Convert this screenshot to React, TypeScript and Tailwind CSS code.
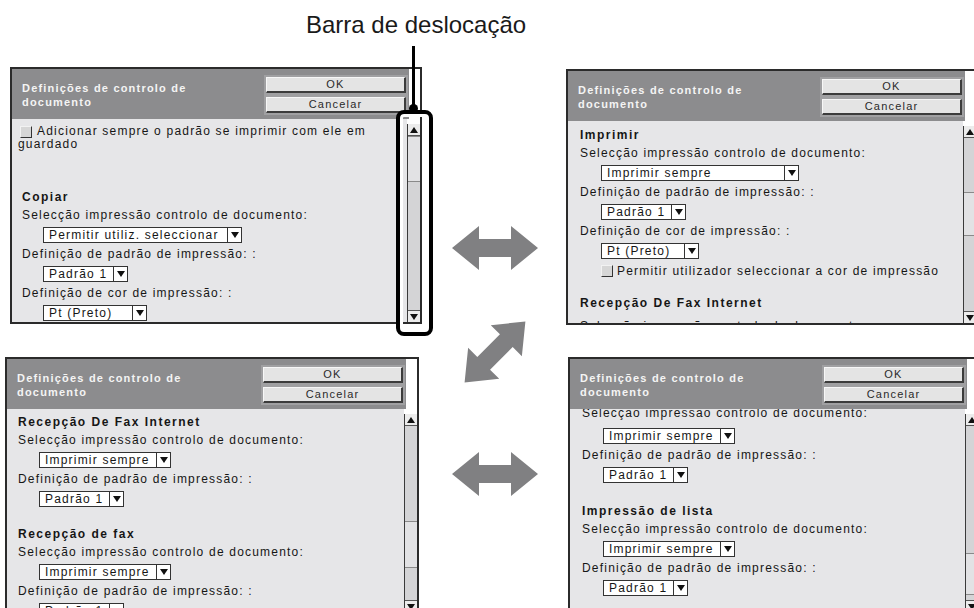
import React from "react";

const body = "text-[12px] tracking-[1.2px] text-[#161616] whitespace-nowrap";

function Caret({up}: {up?: boolean}) {
    return (
        <svg width="8" height="6" viewBox="0 0 8 6">
            <polygon points={up ? "0,6 8,6 4,0" : "0,0 8,0 4,6"} fill="#111"/>
        </svg>
    );
}

function Btn({children}: {children: React.ReactNode}) {
    return (
        <div className="h-[16px] w-[140px] bg-[#e4e4e4] border-t border-l border-r-2 border-b-2 border-t-[#f7f7f7] border-l-[#f7f7f7] border-r-[#3c3c3c] border-b-[#3c3c3c] text-center text-[11px] leading-[13px] tracking-[1.2px] text-[#2a2a2a]">
            {children}
        </div>
    );
}

function Box() {
    return <span className="inline-block w-[12px] h-[12px] shrink-0 bg-[#d6d6d6] border border-t-[#f2f2f2] border-l-[#f2f2f2] border-r-[#333] border-b-[#333]"/>;
}

function Heading({children, className = ""}: {children: React.ReactNode, className?: string}) {
    return <div className={`h-[18px] leading-[18px] font-bold tracking-[1.5px] ${body} ${className}`}>{children}</div>;
}

function Label({children, className = ""}: {children: React.ReactNode, className?: string}) {
    return <div className={`h-[19px] leading-[19px] ${body} ${className}`}>{children}</div>;
}

function Select({children, w}: {children: React.ReactNode, w: string}) {
    return (
        <div className={`flex h-[16px] mt-[2px] mb-[2px] ml-[21px] border border-[#333] bg-white ${w}`}>
            <div className={`flex-1 pl-[5px] leading-[14px] ${body}`}>{children}</div>
            <div className="w-[14px] flex items-center justify-center border-l border-[#333]">
                <Caret/>
            </div>
        </div>
    );
}

function Scrollbar({thumb}: {thumb: string}) {
    return (
        <div className="flex flex-col w-[13px] shrink-0 bg-white pt-[5px]">
            <div className="flex flex-col flex-1 border-l border-[#3a3a3a] bg-[#d4d4d6]">
                <div className="h-[12px] shrink-0 flex items-center justify-center bg-[#ececec] border-b border-[#555]">
                    <Caret up/>
                </div>
                <div className={`shrink-0 bg-[#e2e2e4] border-y border-[#8a8a8a] ${thumb}`}/>
                <div className="mt-auto h-[12px] shrink-0 flex items-center justify-center bg-[#ececec] border-t border-[#555]">
                    <Caret/>
                </div>
            </div>
        </div>
    );
}

interface PanelProps {
    className: string,
    thumb: string,
    content: string,
    children: React.ReactNode
}

function Panel(props: PanelProps) {
    const {className, thumb, content, children} = props;

    return (
        <div className={`flex flex-col shrink-0 border-2 border-[#2b2b2b] bg-white overflow-hidden ${className}`}>
            <div className="flex h-[50px] shrink-0 pr-[11px]">
                <div className="flex flex-1 bg-[#8c8c8e]">
                    <div className="flex-1 pl-[10px] pt-[12px] text-[11px] font-bold leading-[14px] tracking-[1.2px] text-[#f4f4f4] whitespace-nowrap">
                        Definições de controlo de<br/>documento
                    </div>
                    <div className="flex flex-col self-start gap-[4px] mt-[6px] mr-[1px] p-[2px] bg-[#a0a0a2]">
                        <Btn>OK</Btn>
                        <Btn>Cancelar</Btn>
                    </div>
                </div>
            </div>
            <div className="flex flex-1 min-h-0">
                <div className={`flex-1 min-w-0 overflow-hidden bg-[#e6e6e8] ${content}`}>
                    {children}
                </div>
                <Scrollbar thumb={thumb}/>
            </div>
        </div>
    );
}

function HArrow() {
    return (
        <svg width="86" height="44" viewBox="0 0 86 44">
            <polygon points="0,22 27,0 27,13 59,13 59,0 86,22 59,44 59,31 27,31 27,44" fill="#808082"/>
        </svg>
    );
}

function DArrow() {
    return (
        <svg width="62" height="62" viewBox="0 0 62 62">
            <g transform="translate(31 31) rotate(-45) translate(-43 -22)">
                <polygon points="0,22 27,0 27,13 59,13 59,0 86,22 59,44 59,31 27,31 27,44" fill="#808082"/>
            </g>
        </svg>
    );
}

export default function App() {
    return (
        <div className="relative w-[974px] h-[608px] overflow-hidden bg-white font-['Liberation_Sans',Arial,sans-serif]">
            <div className="h-[67px] pl-[306px] pt-[11px] text-[24px] leading-[28px] text-[#1a1a1a]">
                Barra de deslocação
            </div>

            <div className="flex">
                <div className="flex flex-col w-[422px] shrink-0">
                    <Panel className="ml-[10px] w-[412px] h-[257px]" thumb="h-[46px]" content="pl-[10px]">
                        <div className={`pt-[6px] -ml-[4px] leading-[13px] ${body}`}>
                            <div className="flex items-center h-[13px]">
                                <span className="ml-[2px] mr-[5px] flex"><Box/></span>
                                Adicionar sempre o padrão se imprimir com ele em
                            </div>
                            <div>guardado</div>
                        </div>
                        <Heading className="mt-[37px]">Copiar</Heading>
                        <Label>Selecção impressão controlo de documento:</Label>
                        <Select w="w-[199px]">Permitir utiliz. seleccionar</Select>
                        <Label>Definição de padrão de impressão: :</Label>
                        <Select w="w-[85px]">Padrão 1</Select>
                        <Label>Definição de cor de impressão: :</Label>
                        <Select w="w-[104px]">Pt (Preto)</Select>
                    </Panel>

                    <Panel className="mt-[33px] ml-[5px] w-[414px] h-[257px]" thumb="mt-[95px] h-[47px]" content="pl-[11px] pt-[4px]">
                        <Heading>Recepção De Fax Internet</Heading>
                        <Label>Selecção impressão controlo de documento:</Label>
                        <Select w="w-[132px]">Imprimir sempre</Select>
                        <Label>Definição de padrão de impressão: :</Label>
                        <Select w="w-[85px]">Padrão 1</Select>
                        <Heading className="mt-[18px]">Recepção de fax</Heading>
                        <Label>Selecção impressão controlo de documento:</Label>
                        <Select w="w-[132px]">Imprimir sempre</Select>
                        <Label>Definição de padrão de impressão: :</Label>
                        <Select w="w-[85px]">Padrão 1</Select>
                    </Panel>
                </div>

                <div className="flex flex-col w-[144px] shrink-0">
                    <div className="mt-[159px] ml-[30px]"><HArrow/></div>
                    <div className="mt-[51px] ml-[42px]"><DArrow/></div>
                    <div className="mt-[69px] ml-[30px]"><HArrow/></div>
                </div>

                <div className="flex flex-col w-[412px] shrink-0">
                    <Panel className="mt-[2px] w-[412px] h-[256px]" thumb="mt-[54px] h-[44px]" content="pl-[12px] pt-[5px]">
                        <Heading>Imprimir</Heading>
                        <Label>Selecção impressão controlo de documento:</Label>
                        <Select w="w-[198px]">Imprimir sempre</Select>
                        <Label>Definição de padrão de impressão: :</Label>
                        <Select w="w-[85px]">Padrão 1</Select>
                        <Label>Definição de cor de impressão: :</Label>
                        <Select w="w-[98px]">Pt (Preto)</Select>
                        <div className={`flex items-center gap-[4px] h-[19px] ml-[21px] ${body}`}>
                            <Box/>
                            Permitir utilizador seleccionar a cor de impressão
                        </div>
                        <Heading className="mt-[14px]">Recepção De Fax Internet</Heading>
                        <Label className="mt-[5px]">Selecção impressão controlo de documento:</Label>
                    </Panel>

                    <Panel className="mt-[32px] ml-[2px] w-[412px] h-[257px]" thumb="mt-[127px] h-[42px]" content="pl-[12px]">
                        <Label className="-mt-[5px] mb-[5px]">Selecção impressão controlo de documento:</Label>
                        <Select w="w-[132px]">Imprimir sempre</Select>
                        <Label>Definição de padrão de impressão: :</Label>
                        <Select w="w-[85px]">Padrão 1</Select>
                        <Heading className="mt-[19px]">Impressão de lista</Heading>
                        <Label>Selecção impressão controlo de documento:</Label>
                        <Select w="w-[132px]">Imprimir sempre</Select>
                        <Label>Definição de padrão de impressão: :</Label>
                        <Select w="w-[85px]">Padrão 1</Select>
                    </Panel>
                </div>
            </div>

            {/* callout for the scroll bar */}
            <div className="absolute left-[412px] top-[46px] w-[3px] h-[64px] bg-black"/>
            <div className="absolute left-[409px] top-[104px] w-[9px] h-[9px] rounded-full bg-black"/>
            <div className="absolute left-[396px] top-[110px] w-[37px] h-[226px] rounded-[8px] border-4 border-black shadow-[inset_0_0_0_3px_#fff]"/>
        </div>
    );
}
